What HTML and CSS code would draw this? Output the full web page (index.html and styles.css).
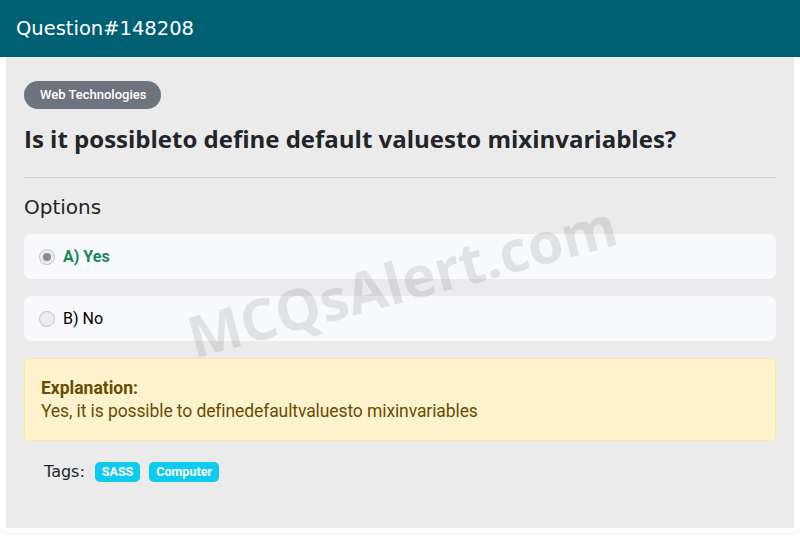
FILE: index.html
```html
<!DOCTYPE html>
<html>
<head>
<meta charset="utf-8">
<link rel="stylesheet" href="styles.css">
</head>
<body>
<div class="card">
  <div class="card-header">Question#148208</div>
  <div class="card-body">
    <span class="cat-badge">Web Technologies</span>
    <h1 class="title">Is it possibleto define default valuesto mixinvariables?</h1>
    <hr class="sep">
    <h2 class="options-title">Options</h2>
    <div class="option correct">
      <span class="radio checked"></span>
      <span class="opt-text">A) Yes</span>
    </div>
    <div class="option">
      <span class="radio"></span>
      <span class="opt-text">B) No</span>
    </div>
    <div class="explain">
      <div class="explain-title">Explanation:</div>
      <div class="explain-text">Yes, it is possible to definedefaultvaluesto mixinvariables</div>
    </div>
    <div class="tags">
      <span class="tags-label">Tags:</span>
      <span class="tag">SASS</span>
      <span class="tag">Computer</span>
    </div>
    <div class="watermark">MCQsAlert.com</div>
  </div>
</div>
</body>
</html>
```

FILE: styles.css
```css
html, body {
  margin: 0;
  padding: 0;
  background: #ffffff;
}
.card {
  width: 800px;
  border-radius: 0 0 6px 6px;
  border-bottom: 1px solid #f3f3f3;
  padding-bottom: 5px;
  box-sizing: border-box;
}
.card-header {
  height: 57px;
  background: #006073;
  color: #ffffff;
  font-family: "DejaVu Sans", sans-serif;
  font-size: 19.5px;
  line-height: 57px;
  padding-left: 16px;
  box-sizing: border-box;
}
.card-body {
  position: relative;
  margin: 0 6px;
  background: #ebebeb;
  padding: 24px 18px 46px 18px;
  overflow: hidden;
}
.cat-badge {
  display: inline-block;
  height: 28px;
  line-height: 28px;
  padding: 0 15px 0 16px;
  border-radius: 14px;
  background: #6c757d;
  color: #ffffff;
  font-family: "Roboto", sans-serif;
  font-size: 13px;
  font-weight: 500;
}
.title {
  margin: 12px 0 0 0;
  font-family: "Open Sans", sans-serif;
  font-weight: 700;
  font-size: 24px;
  line-height: 36px;
  color: #212529;
  letter-spacing: 0;
}
.sep {
  margin: 20px 0 0 0;
  border: 0;
  border-top: 1px solid #d2d2d2;
  height: 0;
}
.options-title {
  margin: 17px 0 0 0;
  font-family: "DejaVu Sans", sans-serif;
  font-weight: 400;
  font-size: 20px;
  line-height: 24px;
  color: #212529;
}
.option {
  display: flex;
  align-items: center;
  gap: 8px;
  height: 45px;
  margin-top: 17px;
  padding-left: 15px;
  background: #f8f9fc;
  border-radius: 7px;
  font-family: "Roboto", sans-serif;
  font-size: 16px;
  color: #000000;
}
.options-title + .option {
  margin-top: 15px;
}
.option.correct .opt-text {
  color: #198754;
  font-weight: 700;
}
.radio {
  width: 14px;
  height: 14px;
  border-radius: 50%;
  border: 1px solid #c4c4c4;
  background: #ececec;
  box-sizing: content-box;
  position: relative;
}
.radio.checked::after {
  content: "";
  position: absolute;
  left: 3px;
  top: 3px;
  width: 8px;
  height: 8px;
  border-radius: 50%;
  background: #8a8a8a;
}
.explain {
  margin-top: 17px;
  background: #fff3cd;
  border: 1px solid #ffe69c;
  border-radius: 6px;
  padding: 18px 16px 17px 16px;
  font-family: "Roboto", sans-serif;
  color: #664d03;
}
.explain-title {
  font-weight: 700;
  font-size: 17.5px;
  line-height: 22px;
}
.explain-text {
  font-size: 17.5px;
  line-height: 24px;
  letter-spacing: -0.1px;
}
.tags {
  display: flex;
  align-items: center;
  gap: 9px;
  margin-top: 20px;
  padding-left: 20px;
  height: 21px;
}
.tags-label {
  font-family: "DejaVu Sans", sans-serif;
  font-size: 16px;
  color: #212529;
  margin-right: 1px;
}
.tag {
  display: inline-block;
  height: 20px;
  line-height: 20px;
  padding: 0 7px;
  border-radius: 5px;
  background: #0dcaf0;
  color: #ffffff;
  font-family: "Roboto", sans-serif;
  font-weight: 700;
  font-size: 12.5px;
}
.watermark {
  position: absolute;
  left: 175px;
  top: 184px;
  font-family: "Open Sans", sans-serif;
  font-weight: 700;
  font-size: 57px;
  color: rgba(0, 0, 0, 0.09);
  transform: rotate(-15deg);
  transform-origin: center;
  pointer-events: none;
  white-space: nowrap;
}
```
